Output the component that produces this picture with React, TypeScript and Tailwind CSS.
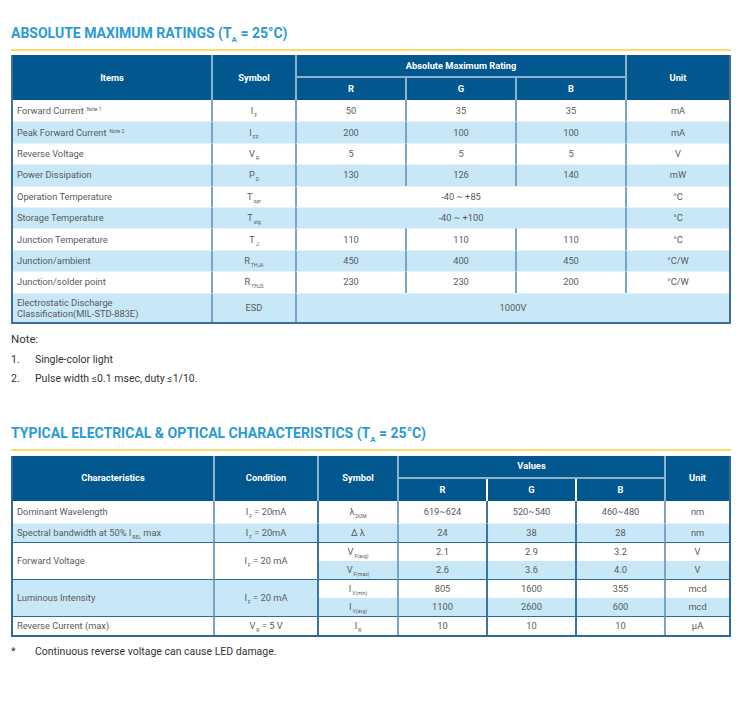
import React from 'react';

type Kids = { children: React.ReactNode };

const Sub = ({ children }: Kids) => (
  <span className="ml-[1px] align-[-3px] text-[5px] leading-none">{children}</span>
);

const Sup = ({ children }: Kids) => (
  <span className="ml-[3px] align-[3px] text-[5px] leading-none">{children}</span>
);

const Title = ({ children }: Kids) => (
  <div>
    <h2 className="text-[14px] leading-[18px] font-bold text-[#2a9ad5]">{children}</h2>
    <div className="mt-[5px] h-[2px] bg-[#f9dd6c]" />
  </div>
);

const TA = () => (
  <>
    (T<span className="align-[-4px] text-[8px] leading-none">A</span> = 25°C)
  </>
);

const head = 'bg-[#02578f] text-white font-bold text-[9.3px] text-center align-middle p-0';
const hl = 'border-l-2 border-l-[#8db0cc]';
const cell = 'text-[9.3px] text-[#5a5a5a] align-middle p-0';
const vl = 'border-l-2 border-l-[#79a4c6]';
const light = 'bg-[#c8e8f8]';

type Rating = {
  item: React.ReactNode;
  sym: React.ReactNode;
  vals: string[];
  unit?: string;
};

const ratings: Rating[] = [
  { item: <>Forward Current<Sup>Note 1</Sup></>, sym: <>I<Sub>F</Sub></>, vals: ['50', '35', '35'], unit: 'mA' },
  { item: <>Peak Forward Current<Sup>Note 2</Sup></>, sym: <>I<Sub>FP</Sub></>, vals: ['200', '100', '100'], unit: 'mA' },
  { item: 'Reverse Voltage', sym: <>V<Sub>R</Sub></>, vals: ['5', '5', '5'], unit: 'V' },
  { item: 'Power Dissipation', sym: <>P<Sub>D</Sub></>, vals: ['130', '126', '140'], unit: 'mW' },
  { item: 'Operation Temperature', sym: <>T<Sub>opr</Sub></>, vals: ['-40 ~ +85'], unit: '°C' },
  { item: 'Storage Temperature', sym: <>T<Sub>stg</Sub></>, vals: ['-40 ~ +100'], unit: '°C' },
  { item: 'Junction Temperature', sym: <>T<Sub>J</Sub></>, vals: ['110', '110', '110'], unit: '°C' },
  { item: 'Junction/ambient', sym: <>R<Sub>THJA</Sub></>, vals: ['450', '400', '450'], unit: '°C/W' },
  { item: 'Junction/solder point', sym: <>R<Sub>THJS</Sub></>, vals: ['230', '230', '200'], unit: '°C/W' },
];

const RatingsTable = () => (
  <div className="border-x-2 border-b-2 border-[#3e6f99]">
    <table className="w-full table-fixed border-separate border-spacing-0">
      <colgroup>
        <col className="w-[198px]" />
        <col className="w-[84px]" />
        <col className="w-[110px]" />
        <col className="w-[110px]" />
        <col className="w-[110px]" />
        <col className="w-[104px]" />
      </colgroup>
      <thead>
        <tr className="h-[23px]">
          <th rowSpan={2} className={head}>Items</th>
          <th rowSpan={2} className={`${head} ${hl}`}>Symbol</th>
          <th colSpan={3} className={`${head} ${hl} border-b-2 border-b-[#8db0cc]`}>Absolute Maximum Rating</th>
          <th rowSpan={2} className={`${head} ${hl}`}>Unit</th>
        </tr>
        <tr className="h-[22px]">
          <th className={`${head} ${hl}`}>R</th>
          <th className={`${head} ${hl}`}>G</th>
          <th className={`${head} ${hl}`}>B</th>
        </tr>
      </thead>
      <tbody>
        {ratings.map((r, i) => {
          const bg = i % 2 === 1 ? light : 'bg-white';
          const top = i > 0 ? 'border-t border-t-[#e4f3fb]' : '';
          return (
            <tr key={i} className="h-[21.4px]">
              <td className={`${cell} ${bg} ${top} pl-[4px] text-left`}>{r.item}</td>
              <td className={`${cell} ${bg} ${top} ${vl} text-center`}>{r.sym}</td>
              {r.vals.length === 1 ? (
                <td colSpan={3} className={`${cell} ${bg} ${top} ${vl} text-center`}>{r.vals[0]}</td>
              ) : (
                r.vals.map((v, j) => (
                  <td key={j} className={`${cell} ${bg} ${top} ${vl} text-center`}>{v}</td>
                ))
              )}
              <td className={`${cell} ${bg} ${top} ${vl} text-center`}>{r.unit}</td>
            </tr>
          );
        })}
        <tr className="h-[29px]">
          <td className={`${cell} ${light} border-t border-t-[#e4f3fb] pl-[4px] text-left leading-[11px]`}>
            Electrostatic Discharge
            <br />
            Classification(MIL-STD-883E)
          </td>
          <td className={`${cell} ${light} border-t border-t-[#e4f3fb] ${vl} text-center`}>ESD</td>
          <td colSpan={4} className={`${cell} ${light} border-t border-t-[#e4f3fb] ${vl} text-center`}>1000V</td>
        </tr>
      </tbody>
    </table>
  </div>
);

const dark = 'border-t border-t-[#2d6a9e]';
const vd = 'border-l-2 border-l-[#3a75a6]';

const CharTable = () => (
  <div className="border-x-2 border-b-2 border-[#2f6a9c]">
    <table className="w-full table-fixed border-separate border-spacing-0">
      <colgroup>
        <col className="w-[200px]" />
        <col className="w-[104px]" />
        <col className="w-[80px]" />
        <col className="w-[89px]" />
        <col className="w-[89px]" />
        <col className="w-[89px]" />
        <col className="w-[65px]" />
      </colgroup>
      <thead>
        <tr className="h-[23px]">
          <th rowSpan={2} className={head}>Characteristics</th>
          <th rowSpan={2} className={`${head} ${hl}`}>Condition</th>
          <th rowSpan={2} className={`${head} ${hl}`}>Symbol</th>
          <th colSpan={3} className={`${head} ${hl} border-b-2 border-b-[#8db0cc]`}>Values</th>
          <th rowSpan={2} className={`${head} ${hl}`}>Unit</th>
        </tr>
        <tr className="h-[22px]">
          <th className={`${head} ${hl}`}>R</th>
          <th className={`${head} border-l-2 border-l-white`}>G</th>
          <th className={`${head} border-l-2 border-l-white`}>B</th>
        </tr>
      </thead>
      <tbody>
        <tr className="h-[22px]">
          <td className={`${cell} bg-white pl-[4px] text-left`}>Dominant Wavelength</td>
          <td className={`${cell} bg-white ${vl} text-center`}>I<Sub>F</Sub> = 20mA</td>
          <td className={`${cell} bg-white ${vd} text-center`}>λ<Sub>DOM</Sub></td>
          <td className={`${cell} bg-white ${vl} text-center`}>619~624</td>
          <td className={`${cell} bg-white ${vd} text-center`}>520~540</td>
          <td className={`${cell} bg-white ${vd} text-center`}>460~480</td>
          <td className={`${cell} bg-white ${vl} text-center`}>nm</td>
        </tr>
        <tr className="h-[19px]">
          <td className={`${cell} ${light} border-t border-t-[#e4f3fb] pl-[4px] text-left`}>
            Spectral bandwidth at 50% I<Sub>REL</Sub> max
          </td>
          <td className={`${cell} ${light} border-t border-t-[#e4f3fb] ${vl} text-center`}>I<Sub>F</Sub> = 20mA</td>
          <td className={`${cell} ${light} border-t border-t-[#e4f3fb] ${vd} text-center`}>Δ λ</td>
          <td className={`${cell} ${light} border-t border-t-[#e4f3fb] ${vl} text-center`}>24</td>
          <td className={`${cell} ${light} border-t border-t-[#e4f3fb] ${vd} text-center`}>38</td>
          <td className={`${cell} ${light} border-t border-t-[#e4f3fb] ${vd} text-center`}>28</td>
          <td className={`${cell} ${light} border-t border-t-[#e4f3fb] ${vl} text-center`}>nm</td>
        </tr>
        <tr className="h-[19px]">
          <td rowSpan={2} className={`${cell} bg-white ${dark} pl-[4px] text-left`}>Forward Voltage</td>
          <td rowSpan={2} className={`${cell} bg-white ${dark} ${vl} text-center`}>I<Sub>F</Sub> = 20 mA</td>
          <td className={`${cell} bg-white ${dark} ${vd} text-center`}>V<Sub>F(avg)</Sub></td>
          <td className={`${cell} bg-white ${dark} ${vl} text-center`}>2.1</td>
          <td className={`${cell} bg-white ${dark} ${vd} text-center`}>2.9</td>
          <td className={`${cell} bg-white ${dark} ${vd} text-center`}>3.2</td>
          <td className={`${cell} bg-white ${dark} ${vl} text-center`}>V</td>
        </tr>
        <tr className="h-[18px]">
          <td className={`${cell} ${light} ${vd} text-center`}>V<Sub>F(max)</Sub></td>
          <td className={`${cell} ${light} ${vl} text-center`}>2.6</td>
          <td className={`${cell} ${light} ${vd} text-center`}>3.6</td>
          <td className={`${cell} ${light} ${vd} text-center`}>4.0</td>
          <td className={`${cell} ${light} ${vl} text-center`}>V</td>
        </tr>
        <tr className="h-[19px]">
          <td rowSpan={2} className={`${cell} ${light} ${dark} pl-[4px] text-left`}>Luminous Intensity</td>
          <td rowSpan={2} className={`${cell} ${light} ${dark} ${vl} text-center`}>I<Sub>F</Sub> = 20 mA</td>
          <td className={`${cell} bg-white ${dark} ${vd} text-center`}>I<Sub>V(min)</Sub></td>
          <td className={`${cell} bg-white ${dark} ${vl} text-center`}>805</td>
          <td className={`${cell} bg-white ${dark} ${vd} text-center`}>1600</td>
          <td className={`${cell} bg-white ${dark} ${vd} text-center`}>355</td>
          <td className={`${cell} bg-white ${dark} ${vl} text-center`}>mcd</td>
        </tr>
        <tr className="h-[18px]">
          <td className={`${cell} ${light} ${vd} text-center`}>I<Sub>V(avg)</Sub></td>
          <td className={`${cell} ${light} ${vl} text-center`}>1100</td>
          <td className={`${cell} ${light} ${vd} text-center`}>2600</td>
          <td className={`${cell} ${light} ${vd} text-center`}>600</td>
          <td className={`${cell} ${light} ${vl} text-center`}>mcd</td>
        </tr>
        <tr className="h-[19px]">
          <td className={`${cell} bg-white ${dark} pl-[4px] text-left`}>Reverse Current (max)</td>
          <td className={`${cell} bg-white ${dark} ${vl} text-center`}>V<Sub>R</Sub> = 5 V</td>
          <td className={`${cell} bg-white ${dark} ${vd} text-center`}>I<Sub>R</Sub></td>
          <td className={`${cell} bg-white ${dark} ${vl} text-center`}>10</td>
          <td className={`${cell} bg-white ${dark} ${vd} text-center`}>10</td>
          <td className={`${cell} bg-white ${dark} ${vd} text-center`}>10</td>
          <td className={`${cell} bg-white ${dark} ${vl} text-center`}>μA</td>
        </tr>
      </tbody>
    </table>
  </div>
);

export default function App() {
  return (
    <div className="w-[754px] h-[715px] bg-white pl-[11px] pr-[23px] pt-[24px] font-['Roboto',sans-serif]">
      <Title>
        ABSOLUTE MAXIMUM RATINGS <TA />
      </Title>
      <div className="mt-[4px]">
        <RatingsTable />
      </div>

      <div className="mt-[7px] text-[11.5px] leading-[16px] text-[#333]">Note:</div>
      <ol className="mt-[3px] text-[10.5px] leading-[19px] text-[#333]">
        <li className="flex">
          <span className="w-[24px]">1.</span>
          <span>Single-color light</span>
        </li>
        <li className="flex">
          <span className="w-[24px]">2.</span>
          <span>Pulse width ≤0.1 msec, duty ≤1/10.</span>
        </li>
      </ol>

      <div className="mt-[36px]">
        <Title>
          TYPICAL ELECTRICAL &amp; OPTICAL CHARACTERISTICS <TA />
        </Title>
      </div>
      <div className="mt-[5px]">
        <CharTable />
      </div>

      <div className="mt-[7px] flex text-[10.5px] leading-[16px] text-[#333]">
        <span className="w-[24px]">*</span>
        <span>Continuous reverse voltage can cause LED damage.</span>
      </div>
    </div>
  );
}
